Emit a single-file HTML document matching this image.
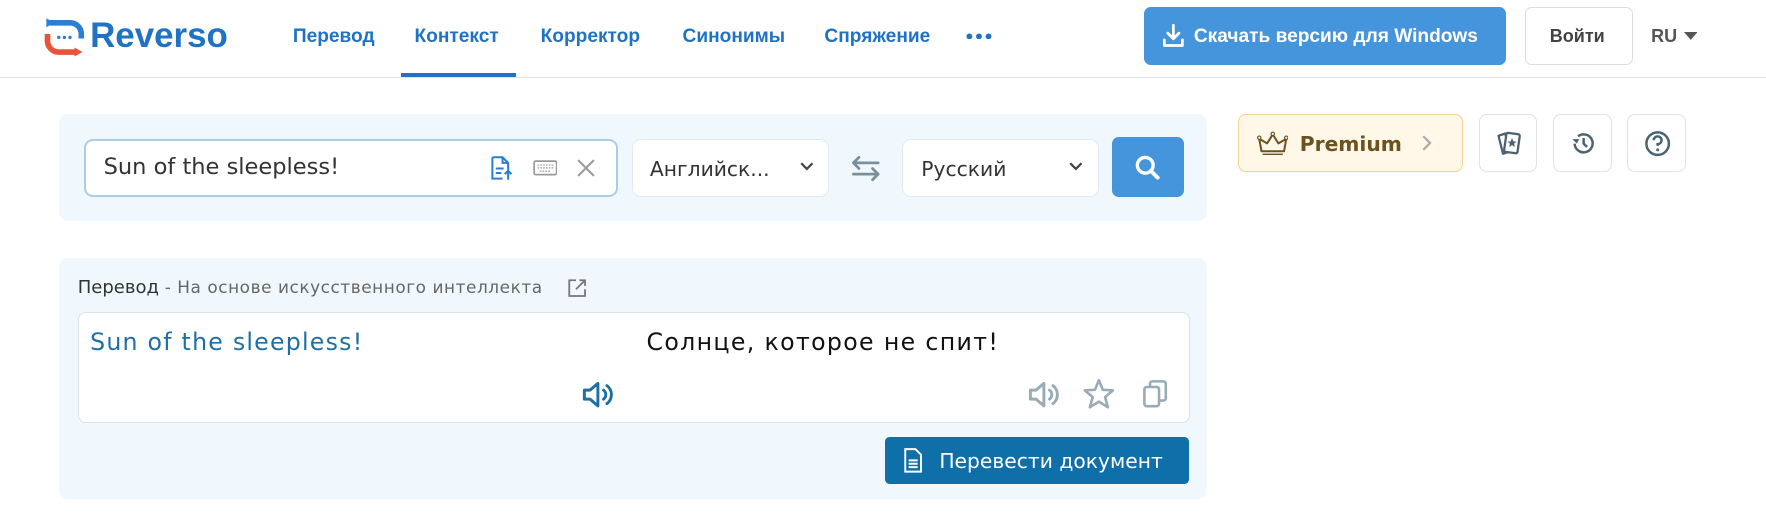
<!DOCTYPE html>
<html><head><meta charset="utf-8">
<style>
html,body{margin:0;padding:0;background:#fff;}
body{width:1568px;height:457px;zoom:1.12628;position:relative;overflow:hidden;font-family:"Liberation Sans","DejaVu Sans",sans-serif;}
.a{position:absolute;}
.hdr{left:0;top:0;width:1568px;height:68px;border-bottom:1px solid #e2e2e2;}
.nav{top:23px;font-size:17px;color:#1f72c4;font-weight:bold;}
.btn{border-radius:6px;box-sizing:border-box;}
.panel{background:#f1f8fd;border-radius:8px;}
.mont{font-family:"DejaVu Sans","Liberation Sans",sans-serif;}
.sel{background:#fff;border:1px solid #e3e9ee;border-radius:8px;box-sizing:border-box;}
.ib{border:1px solid #dfe3e7;border-radius:7px;width:52px;height:52px;top:101px;box-sizing:border-box;background:#fff;}
.ib svg{position:absolute;left:13px;top:13px;}
</style></head><body>
<div class="a hdr"></div>
<svg class="a" style="left:38px;top:14px" width="38" height="38" viewBox="0 0 38 38">
<path d="M10 6 L3 2 L3 10 Z" fill="#2a7fd4"/>
<path d="M6 6 H24 A10 10 0 0 1 34 16 V20" fill="none" stroke="#2a7fd4" stroke-width="5"/>
<path d="M4 16 V22 A10 10 0 0 0 14 32 H30" fill="none" stroke="#e8533a" stroke-width="5"/>
<path d="M28 28 L35 32 L28 36 Z" fill="#e8533a"/>
<circle cx="14" cy="19" r="1.5" fill="#2a7fd4"/><circle cx="19" cy="19" r="1.5" fill="#2a7fd4"/><circle cx="24" cy="19" r="1.5" fill="#2a7fd4"/>
</svg>
<div class="a" style="left:80px;top:14px;font-size:31px;font-weight:bold;color:#1f72c4;">Reverso</div>
<div class="a nav" style="left:260px">Перевод</div>
<div class="a nav" style="left:368px">Контекст</div>
<div class="a" style="left:356px;top:65px;width:102px;height:3px;background:#1f72c4"></div>
<div class="a nav" style="left:480px">Корректор</div>
<div class="a nav" style="left:606px">Синонимы</div>
<div class="a nav" style="left:732px">Спряжение</div>
<svg class="a" style="left:858px;top:29px" width="24" height="6"><circle cx="3" cy="3" r="2.6" fill="#1f72c4"/><circle cx="11.5" cy="3" r="2.6" fill="#1f72c4"/><circle cx="20" cy="3" r="2.6" fill="#1f72c4"/></svg>
<div class="a btn" style="left:1016px;top:6px;width:321px;height:52px;background:#4595dd;"></div>
<svg class="a" style="left:1031px;top:20px" width="22" height="24" viewBox="0 0 22 24"><path d="M11 2 V14 M6 9 L11 14 L16 9 M3 15 V20 H19 V15" fill="none" stroke="#fff" stroke-width="2.4" stroke-linecap="round" stroke-linejoin="round"/></svg>
<div class="a" style="left:1060px;top:23px;font-size:17px;font-weight:bold;color:#fff">Скачать версию для Windows</div>
<div class="a btn" style="left:1354px;top:6px;width:96px;height:52px;border:1px solid #dcdcdc;"></div>
<div class="a" style="left:1376px;top:23px;font-size:16px;font-weight:bold;color:#444">Войти</div>
<div class="a" style="left:1466px;top:23px;font-size:16px;font-weight:bold;color:#555">RU</div>
<svg class="a" style="left:1495px;top:28px" width="12" height="8"><path d="M0 0 H12 L6 7 Z" fill="#555"/></svg>

<div class="a panel" style="left:52px;top:101px;width:1020px;height:95px"></div>
<div class="a" style="left:75px;top:123px;width:474px;height:52px;border:2px solid #a8cdeb;border-radius:8px;box-sizing:border-box;background:#fff"></div>
<div class="a mont" style="left:92px;top:137px;font-size:20px;color:#333">Sun of the sleepless!</div>
<svg class="a" style="left:434px;top:138px" width="24" height="24" viewBox="0 0 24 24"><path d="M3 2 H12 L17 7 V14 M3 2 V21 H12 M12 2 V7 H17 M6 12 H13 M6 16 H11" fill="none" stroke="#2a7fd4" stroke-width="1.8"/><path d="M17 22 V14 M14 17 L17 14 L20 17" fill="none" stroke="#2a7fd4" stroke-width="1.8"/></svg>
<svg class="a" style="left:473px;top:142px" width="22" height="14" viewBox="0 0 22 14"><rect x="1" y="1" width="20" height="12" rx="1.5" fill="none" stroke="#999" stroke-width="1.5"/><path d="M4 4.5H18M4 7H18M6 10H16" stroke="#aaa" stroke-width="1.3" stroke-dasharray="1.5 1"/></svg>
<svg class="a" style="left:512px;top:141px" width="16" height="16"><path d="M1 1 L15 15 M15 1 L1 15" stroke="#999" stroke-width="1.8"/></svg>
<div class="a sel" style="left:561px;top:123px;width:175px;height:52px"></div>
<div class="a mont" style="left:577px;top:139px;font-size:18px;color:#333">Английск...</div>
<svg class="a" style="left:709px;top:143px" width="14" height="10"><path d="M2 2 L7 7 L12 2" fill="none" stroke="#444" stroke-width="2"/></svg>
<svg class="a" style="left:755px;top:138px" width="28" height="24" viewBox="0 0 28 24"><path d="M3 7 H25 M3 7 L8 2 M3 7 L8 12 M25 17 H3 M25 17 L20 12 M25 17 L20 22" fill="none" stroke="#78909c" stroke-width="2.4" stroke-linecap="round"/></svg>
<div class="a sel" style="left:801px;top:123px;width:175px;height:52px"></div>
<div class="a mont" style="left:818px;top:139px;font-size:18px;color:#333">Русский</div>
<svg class="a" style="left:948px;top:143px" width="14" height="10"><path d="M2 2 L7 7 L12 2" fill="none" stroke="#444" stroke-width="2"/></svg>
<div class="a btn" style="left:987px;top:122px;width:64px;height:53px;background:#4595dd"></div>
<svg class="a" style="left:1007px;top:137px" width="24" height="24"><circle cx="10" cy="10" r="7" fill="none" stroke="#fff" stroke-width="3"/><path d="M15 15 L21 21" stroke="#fff" stroke-width="3.5" stroke-linecap="round"/></svg>

<div class="a" style="left:1099px;top:101px;width:200px;height:52px;background:#fff7e7;border:1px solid #f2d58d;border-radius:7px;box-sizing:border-box"></div>
<svg class="a" style="left:1116px;top:116px" width="28" height="22" viewBox="0 0 28 22"><path d="M4 18 L2 7 L9 11 L14 3 L19 11 L26 7 L24 18 Z M5 21 H23" fill="none" stroke="#6b5220" stroke-width="1.8" stroke-linejoin="round"/><circle cx="2" cy="6" r="1.5" fill="#fff7e7" stroke="#6b5220"/><circle cx="14" cy="2.5" r="1.5" fill="#fff7e7" stroke="#6b5220"/><circle cx="26" cy="6" r="1.5" fill="#fff7e7" stroke="#6b5220"/></svg>
<div class="a mont" style="left:1154px;top:117px;font-size:18px;font-weight:bold;color:#6b5220">Premium</div>
<svg class="a" style="left:1262px;top:119px" width="10" height="16"><path d="M2 2 L8 8 L2 14" fill="none" stroke="#aaa" stroke-width="2"/></svg>
<div class="a ib" style="left:1313px"><svg width="26" height="26" viewBox="0 0 26 26"><path d="M4 6 L10 4 L14 20 L8 22 Z" fill="none" stroke="#4a6272" stroke-width="2" stroke-linejoin="round"/><rect x="10" y="4" width="12" height="17" rx="1.5" transform="rotate(8 16 12)" fill="#fff" stroke="#4a6272" stroke-width="2"/><path d="M16 8 L17.2 11 L20 11.2 L17.8 13 L18.6 16 L16 14.3 L13.4 16 L14.2 13 L12 11.2 L14.8 11 Z" fill="#4a6272"/></svg></div>
<div class="a ib" style="left:1379px"><svg width="26" height="26" viewBox="0 0 26 26"><path d="M5 13 A8 8 0 1 0 8 6.5" fill="none" stroke="#4a6272" stroke-width="2.2"/><path d="M3 9 L7 13 L9 9 Z" fill="#4a6272"/><path d="M13 8 V13 L16 16" fill="none" stroke="#4a6272" stroke-width="2.2"/></svg></div>
<div class="a ib" style="left:1445px"><svg width="26" height="26" viewBox="0 0 26 26"><circle cx="13" cy="13" r="10" fill="none" stroke="#4a6272" stroke-width="2.2"/><path d="M9.5 10 A3.5 3.5 0 1 1 13 13.5 V15" fill="none" stroke="#4a6272" stroke-width="2.2"/><circle cx="13" cy="18.5" r="1.3" fill="#4a6272"/></svg></div>

<div class="a panel" style="left:52px;top:229px;width:1020px;height:214px"></div>
<div class="a mont" style="left:69px;top:246px;font-size:16px;color:#333">Перевод <span style="font-size:15px;letter-spacing:0.5px;color:#666">- На основе искусственного интеллекта</span></div>
<svg class="a" style="left:503px;top:247px" width="18" height="18" viewBox="0 0 18 18"><path d="M8 2 H2 V16 H16 V10 M11 2 H16 V7 M16 2 L8 10" fill="none" stroke="#777" stroke-width="1.6"/></svg>
<div class="a" style="left:69px;top:277px;width:988px;height:99px;background:#fff;border:1px solid #dbe3ea;border-radius:7px;box-sizing:border-box"></div>
<div class="a mont" style="left:80px;top:291px;font-size:21px;letter-spacing:1.1px;color:#1e6fa3">Sun of the sleepless!</div>
<div class="a mont" style="left:574px;top:291px;font-size:21px;letter-spacing:1.2px;color:#111">Солнце, которое не спит!</div>
<svg class="a" style="left:516px;top:337px" width="30" height="26" viewBox="0 0 30 26"><path d="M3 9 H8 L15 3 V23 L8 17 H3 Z" fill="none" stroke="#1e6fa3" stroke-width="2.6" stroke-linejoin="round"/><path d="M20 9 A5 5 0 0 1 20 17 M23 5 A10 10 0 0 1 23 21" fill="none" stroke="#1e6fa3" stroke-width="2.6" stroke-linecap="round"/></svg>
<svg class="a" style="left:912px;top:337px" width="30" height="26" viewBox="0 0 30 26"><path d="M3 9 H8 L15 3 V23 L8 17 H3 Z" fill="none" stroke="#9aabb8" stroke-width="2.6" stroke-linejoin="round"/><path d="M20 9 A5 5 0 0 1 20 17 M23 5 A10 10 0 0 1 23 21" fill="none" stroke="#9aabb8" stroke-width="2.6" stroke-linecap="round"/></svg>
<svg class="a" style="left:961px;top:336px" width="30" height="28" viewBox="0 0 30 28"><path d="M15 2 L18.5 10.5 L27.5 11 L20.5 17 L23 26 L15 21 L7 26 L9.5 17 L2.5 11 L11.5 10.5 Z" fill="none" stroke="#9aabb8" stroke-width="2.3" stroke-linejoin="round"/></svg>
<svg class="a" style="left:1013px;top:336px" width="26" height="28" viewBox="0 0 26 28"><rect x="3" y="8" width="13" height="17" rx="2" fill="none" stroke="#9aabb8" stroke-width="2.3"/><path d="M8 8 V5 A2 2 0 0 1 10 3 H20 A2 2 0 0 1 22 5 V18 A2 2 0 0 1 20 20 H16" fill="none" stroke="#9aabb8" stroke-width="2.3"/></svg>
<div class="a" style="left:786px;top:388px;width:270px;height:42px;background:#0f6fa9;border-radius:4px"></div>
<svg class="a" style="left:802px;top:398px" width="18" height="22" viewBox="0 0 18 22"><path d="M2 1 H11 L16 6 V21 H2 Z M5 11 H13 M5 14 H13 M5 17 H13" fill="none" stroke="#fff" stroke-width="1.7"/></svg>
<div class="a mont" style="left:834px;top:399px;font-size:18px;color:#fff">Перевести документ</div>
</body></html>
